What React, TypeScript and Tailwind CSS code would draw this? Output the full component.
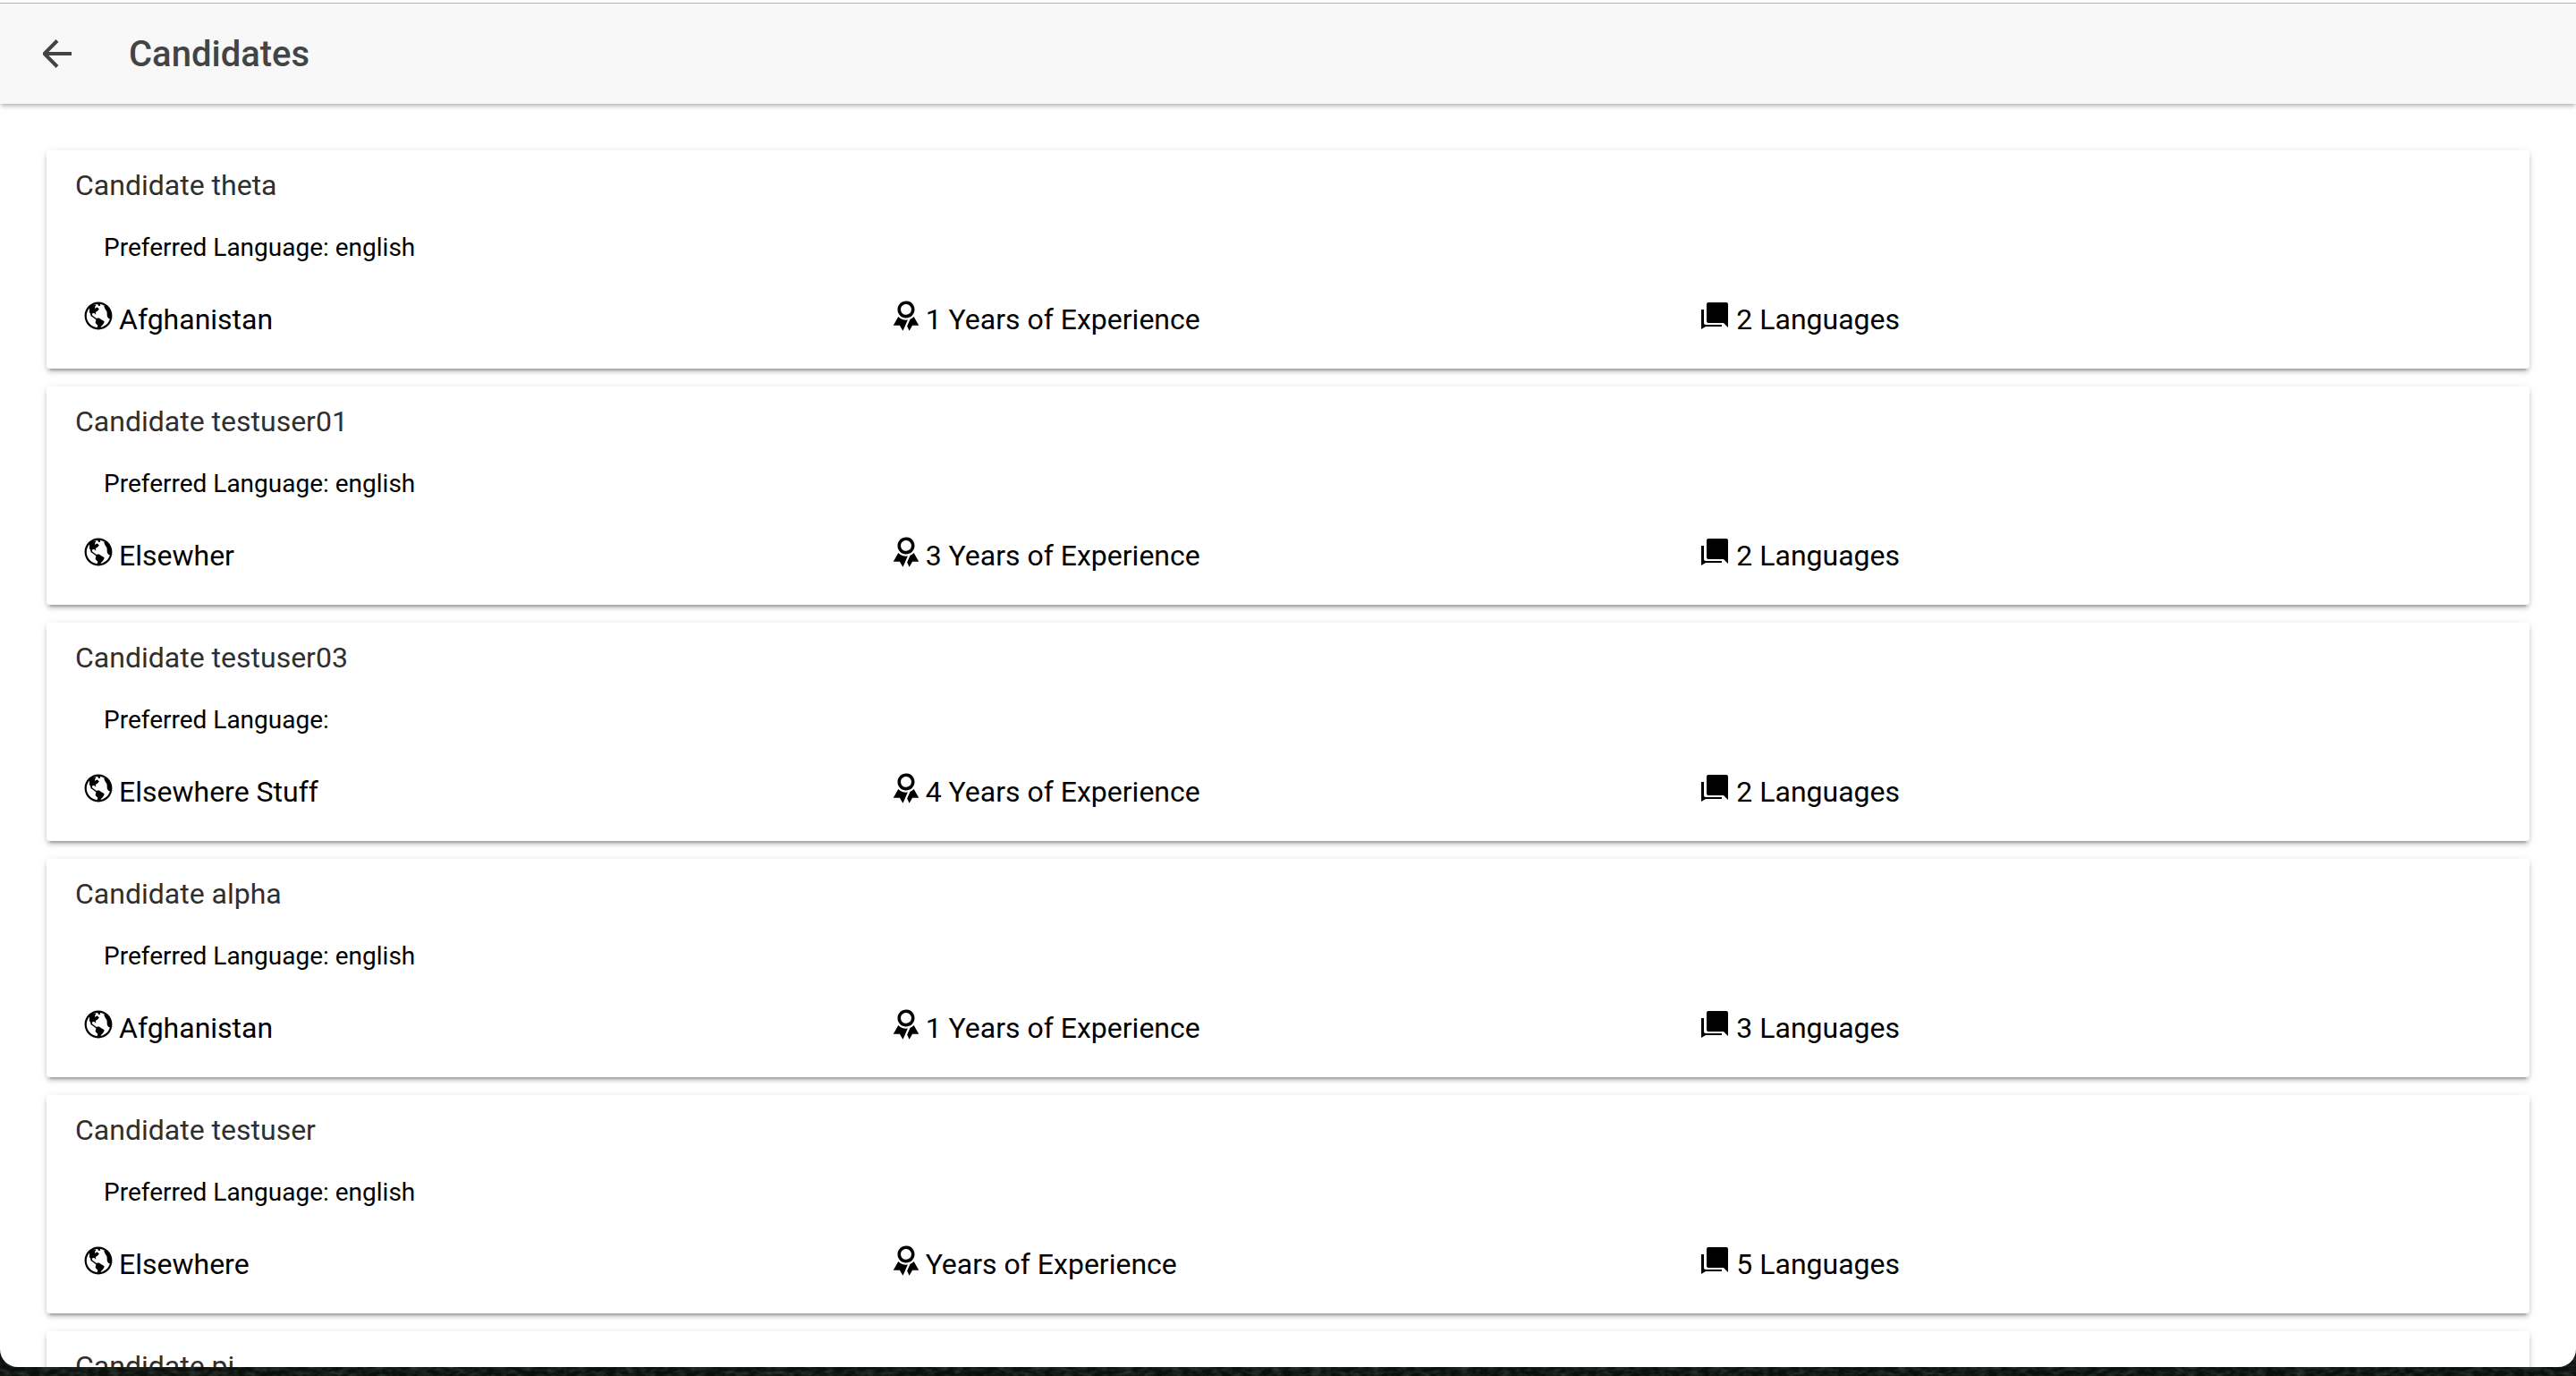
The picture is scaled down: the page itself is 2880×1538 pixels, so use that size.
import React from 'react';
import { IoMdGlobe, IoMdRibbon } from 'react-icons/io';

const candidates = [
  { name: 'theta', language: 'english', country: 'Afghanistan', years: '1 Years of Experience', languages: '2 Languages' },
  { name: 'testuser01', language: 'english', country: 'Elsewher', years: '3 Years of Experience', languages: '2 Languages' },
  { name: 'testuser03', language: '', country: 'Elsewhere Stuff', years: '4 Years of Experience', languages: '2 Languages' },
  { name: 'alpha', language: 'english', country: 'Afghanistan', years: '1 Years of Experience', languages: '3 Languages' },
  { name: 'testuser', language: 'english', country: 'Elsewhere', years: 'Years of Experience', languages: '5 Languages' },
  { name: 'pi', language: 'english', country: 'Afghanistan', years: '2 Years of Experience', languages: '2 Languages' },
];

function BackArrow() {
  return (
    <svg viewBox="0 0 32 32" className="h-[32px] w-[32px] text-[#444444]" fill="none" stroke="currentColor" strokeWidth="4">
      <path d="M32 16H2" />
      <path d="M16 1.5L1.5 16L16 30.5" />
    </svg>
  );
}

function ChatIcon() {
  return (
    <svg viewBox="0 0 30 30" className="mr-[5px] ml-[5px] h-[30px] w-[30px]" fill="currentColor">
      <path d="M6 2a2 2 0 0 1 2-2H28a2 2 0 0 1 2 2V28L25 23H8a2 2 0 0 1-2-2Z" />
      <path d="M0 8H3V23a2 2 0 0 0 2 2H23V27H5L0 30Z" />
    </svg>
  );
}

function Stat({ icon, text }: { icon: React.ReactNode; text: string }) {
  return (
    <div className="flex items-center gap-[4px] pl-[6px]">
      <span className="-mt-[8px]">{icon}</span>
      <span>{text}</span>
    </div>
  );
}

function CandidateCard({ name, language, country, years, languages }: (typeof candidates)[number]) {
  return (
    <div className="h-[244px] shrink-0 rounded-[4px] bg-white pt-[18px] shadow-[0_6px_2px_-4px_rgba(0,0,0,0.2),0_4px_4px_0_rgba(0,0,0,0.14),0_2px_10px_0_rgba(0,0,0,0.12)]">
      <h2 className="pl-[32px] text-[32px] leading-[42px] text-[#2f2f2f]">Candidate {name}</h2>
      <p className="mt-[31px] pl-[64px] text-[28px] leading-[36px] text-black">Preferred Language: {language}</p>
      <div className="mt-[41px] grid grid-cols-3 px-[34px] text-[32px] leading-[42px] text-black">
        <Stat icon={<IoMdGlobe size={38} className="-ml-[1px]" />} text={country} />
        <Stat icon={<IoMdRibbon size={38} className="-mr-[1px] -ml-[1px]" />} text={years} />
        <Stat icon={<ChatIcon />} text={languages} />
      </div>
    </div>
  );
}

export default function App() {
  return (
    <div className="relative flex h-screen flex-col overflow-hidden bg-[#0c100c] font-['Roboto',sans-serif]">
      <svg className="absolute inset-x-0 bottom-0 h-[40px] w-full" aria-hidden="true">
        <filter id="foliage">
          <feTurbulence type="fractalNoise" baseFrequency="0.09 0.2" numOctaves="3" seed="4" />
          <feColorMatrix values="0 0 0 0 0.1  0 0 0 0 0.15  0 0 0 0 0.13  0.8 0 0 0 -0.3" />
        </filter>
        <rect width="100%" height="100%" filter="url(#foliage)" />
      </svg>
      <div className="relative flex h-[1528px] flex-col overflow-hidden rounded-b-[20px] bg-white">
        <div className="h-[3px] shrink-0 bg-white" />
        <header className="z-10 flex h-[113px] shrink-0 items-center border-t border-[#b4b4b4] bg-[#f8f8f8] pl-[48px] shadow-[0_4px_4px_-2px_rgba(0,0,0,0.2),0_4px_5px_0_rgba(0,0,0,0.1)]">
          <BackArrow />
          <h1 className="mt-[2px] ml-[64px] text-[40px] font-medium text-[#444444]">Candidates</h1>
        </header>
        <main className="flex flex-col gap-[20px] px-[52px] pt-[52px]">
          {candidates.map((c) => (
            <CandidateCard key={c.name} {...c} />
          ))}
        </main>
      </div>
    </div>
  );
}
